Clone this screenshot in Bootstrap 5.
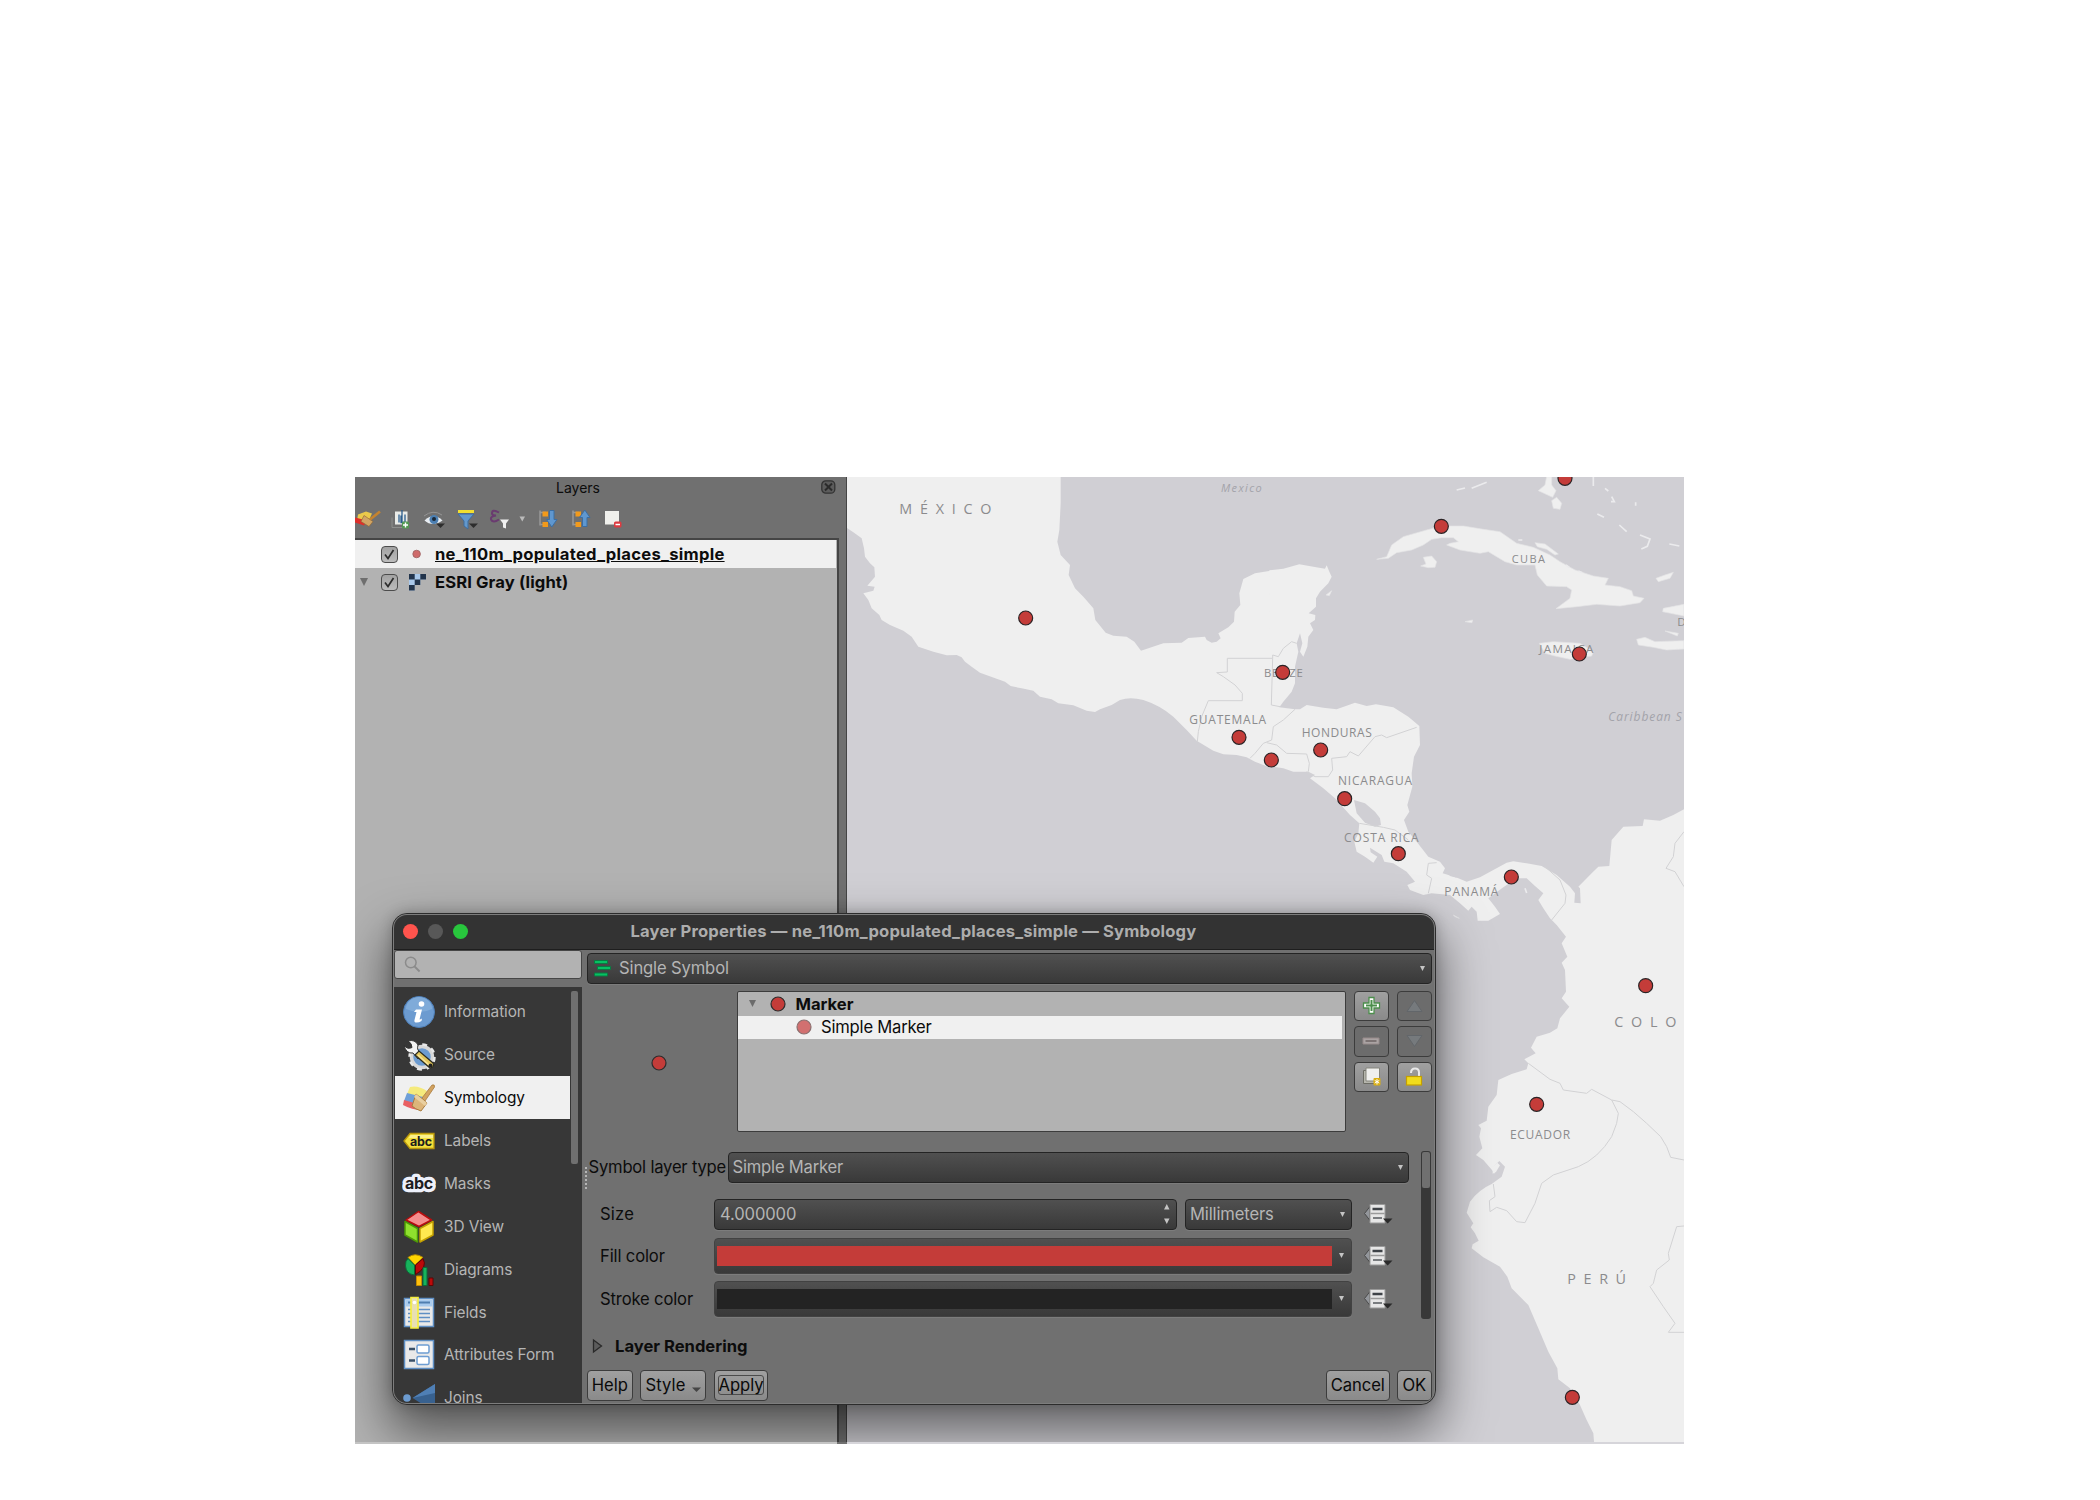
<!DOCTYPE html>
<html lang="en">
<head>
<meta charset="utf-8">
<meta name="viewport" content="width=device-width, initial-scale=1">
<title>Layer Properties — ne_110m_populated_places_simple — Symbology</title>
<link href="https://cdn.jsdelivr.net/npm/bootstrap@5.3.0/dist/css/bootstrap.min.css" rel="stylesheet">
<style>
body{font-family:Inter,"Liberation Sans",sans-serif;font-size:16.6px;letter-spacing:-.14px;line-height:20px;color:#0c0c0c;background:#fff;padding:477px 0 0 355px;overflow:hidden}
svg{display:block;flex:none}
.app-stage{width:1329px;height:967px;overflow:hidden}
.stage-clip{height:965px;overflow:hidden;position:relative}
.foot-strip{height:2px;background:linear-gradient(90deg,#c4c4c4 482px,#707070 482px,#707070 492px,#d6d5da 492px)}
.fw-b{font-weight:700;letter-spacing:.1px}
/* layers panel */
.layers-panel{width:492px;background:#707070;border-right:1.5px solid #454545}
.panel-head{height:25px;font-size:14px;letter-spacing:0;padding-left:7px}
.tools{height:36px}
.layer-list{background:#b2b2b2;border-top:2px solid #454545;border-right:2px solid #454545;width:484px}
.layer-row{height:28px;padding-left:26px}
.layer-row.active{background:#f0f0f0;margin-right:1px}
.check{width:17px;height:17px;border:1.4px solid #4c4c4c;border-radius:4px;background:linear-gradient(#a2a2a2,#bcbcbc)}
/* dialog */
.dlg{left:36.5px;top:436px;width:1044.5px;height:491.5px;border:1px solid #2c2c2c;border-radius:15px;background:#707070;box-shadow:0 24px 50px 4px rgba(0,0,0,.52),0 0 14px rgba(0,0,0,.22)}
.dlg-in{border:1px solid #7d7d7d;border-radius:14px;overflow:hidden}
.dlg-title{height:35px;background:#333;border-bottom:1.5px solid #1e1e1e;color:#adadad;letter-spacing:.17px;padding:0 0 2px 12px}
.light{width:15px;height:15px;border-radius:50%}
.side{width:188px}
.search{height:29px;background:#b2b2b2;border:1.5px solid #464646;border-radius:3px;padding-left:9px}
.side-list{margin-top:8px;height:416px;background:#373737;padding:3px 3.5px 0 1.5px;overflow:hidden}
.side-item{height:42.95px;padding-left:7px;gap:8px;font-size:15.4px;letter-spacing:-.1px;color:#b5b5b5;width:175px;padding-top:1px}
.side-item.active{background:#f0f0f0;color:#0a0a0a}
.side-item svg{width:34px;height:34px}
.side-thumb{width:7.5px;height:173px;background:#707070;border-radius:2px;margin-top:1px}
.dark-box{border:1.5px solid #242424;border-radius:4px;background:linear-gradient(#505050,#393939);color:#b5b5b5;height:30.5px;box-shadow:0 1px 0 #7c7c7c}
.clr{height:35.5px;border-color:#424242;padding:0 6px 0 2px}
.swatch{height:20.5px;width:614.5px}
.tree{width:609px;height:141px;background:#b2b2b2;border:1.5px solid #3c3c3c;border-radius:2px}
.qbtn{height:30.5px;border:1.5px solid #3c3c3c;border-radius:4px;background:linear-gradient(#a0a0a0,#8a8a8a);color:#0a0a0a;padding:0;line-height:20px;font-size:16.6px;letter-spacing:-.05px}
.qbtn.off{background:#6c6c6c}
.tool-grid{display:grid;grid-template-columns:35px 35px;gap:5px 8px;margin-left:8px}
.main-col{padding:3px 3.5px 0 5.5px}
.form-lbl{width:115px;padding-left:1px}
</style>
</head>
<body>
<main class="app-stage">
<div class="stage-clip d-flex">
  <section class="layers-panel d-flex flex-column flex-shrink-0">
    <div class="panel-head position-relative d-flex justify-content-center">
      <span class="d-block" style="margin-top:1px;margin-right:52px">Layers</span>
      <svg class="position-absolute" style="right:10px;top:3px" width="15" height="14" viewBox="0 0 15 14"><rect x=".8" y=".8" width="13" height="12.4" rx="4" fill="#5c5c5c" stroke="#333" stroke-width="1.3"/><path d="M4 3.5l7 7M11 3.5l-7 7" stroke="#2b2b2b" stroke-width="2"/></svg>
    </div>
    <div class="tools">
      <svg width="300" height="34" viewBox="355 501.500 300 34">
        <path d="M358 514l8-3 6 2-4 9-11-2z" fill="#eac94b"/><path d="M355 517l12 3-3 5-9-3z" fill="#dd2f2a"/><path d="M364 515l9 6-4 5-8-5z" fill="#d1a565" stroke="#8d6530" stroke-width=".6"/><path d="M370 519l10-8" stroke="#c5832f" stroke-width="2.600"/>
        <path d="M392 517v10h11M396 512v12" stroke="#8d8f8d" fill="none"/><path d="M395 511h12.500v13H395z" fill="#e9ebe8"/><path d="M399 514v8M402 509.500v12M405 514v8h-4v-7" fill="none" stroke="#2b5e8e" stroke-width="1.300"/><rect x="402" y="521" width="7" height="7" rx="1.5" fill="#529a52"/><path d="M405.500 522v5M403 524.500h5" stroke="#fff" stroke-width="1.4"/>
        <path d="M424 515.500q9-7 18-1" fill="none" stroke="#949494"/><path d="M424.500 520q9-9 18 0q-10 7-18 0z" fill="#e8edf2"/><circle cx="434" cy="519" r="4.500" fill="#4c7fb2"/><circle cx="434" cy="518.500" r="2" fill="#1b2836"/><path d="M436 523h9l-4.500 4.500z" fill="#2d2d2d"/>
        <path d="M458 511h16" stroke="#f2df2f" stroke-width="3"/><path d="M458 513.500h16l-6 7v8l-4-3v-5z" fill="#6398cc" stroke="#3f6c9d"/><path d="M469 523h9l-4.500 4.500z" fill="#2d2d2d"/>
        <path d="M499 512q-7-4-7 1q0 2 4 2q-6 1-5 4q2 4 8 0" fill="none" stroke="#6a3b70" stroke-width="2"/><path d="M500 519h9l-3 4v5l-3-1v-4z" fill="#f0f0f0"/>
        <path d="M519.500 516h5.500l-2.700 5z" fill="#bbb"/>
        <g id="exp"><path d="M540 510v15M540 512h6M540 524h6" stroke="#989898" stroke-width="1.500"/><rect x="542.500" y="511" width="5.500" height="5" fill="#f29a1b"/><rect x="542.500" y="521.500" width="5.500" height="5" fill="#f29a1b"/></g>
        <path d="M549.500 510h4.500v9h3l-5.200 7.500-5.300-7.500h3z" fill="#5f97cf" stroke="#3b6ea3"/>
        <use href="#exp" x="33"/><path d="M582.500 526h4.500v-9h3l-5.200-7.500-5.300 7.500h3z" fill="#5f97cf" stroke="#3b6ea3"/>
        <rect x="605" y="510.500" width="14" height="13.500" fill="#f0f0ec"/><rect x="614" y="521" width="7.500" height="6" rx="1.500" fill="#dd3b40"/><path d="M615.500 524h4.500" stroke="#fff" stroke-width="1.500"/>
      </svg>
    </div>
    <div class="layer-list flex-grow-1">
      <div class="layer-row active d-flex align-items-center">
        <span class="check"><svg width="14" height="14" viewBox="0 0 14 14"><path d="M3 7.500l3 4L11.500 3" fill="none" stroke="#2c2c2c" stroke-width="1.700"/></svg></span>
        <svg width="37" height="12" viewBox="0 0 37 12"><circle cx="18.600" cy="6" r="3.800" fill="#cf6b6b" stroke="#9a6060" stroke-width=".8"/></svg>
        <span class="fw-b text-decoration-underline" style="letter-spacing:.27px">ne_110m_populated_places_simple</span>
      </div>
      <div class="layer-row d-flex align-items-center" style="padding-left:2px">
        <svg width="24" height="12" viewBox="0 0 24 12"><path d="M3 2h8l-4 8z" fill="#6e6e6e"/></svg>
        <span class="check"><svg width="14" height="14" viewBox="0 0 14 14"><path d="M3 7.500l3 4L11.500 3" fill="none" stroke="#2c2c2c" stroke-width="1.700"/></svg></span>
        <svg width="37" height="18" viewBox="0 0 37 18"><path d="M11 1h17v5.500h-5.700v5.500h-5.700v5.500H11z" fill="#a9c8ea"/><path d="M11 1h5.700v5.500H11zM22.300 1H28v5.500h-5.700zM16.700 6.500h5.600V12h-5.600zM11 12h5.700v5.500H11z" fill="#22344c"/></svg>
        <span class="fw-b" style="letter-spacing:.12px">ESRI Gray (light)</span>
      </div>
    </div>
  </section>

  <section class="flex-grow-1">
    <svg width="837" height="965" viewBox="847 477 837 965">
      <rect x="847" y="477" width="837" height="967" fill="#d0cfd4"/>
      <g transform="translate(1250 470) scale(.33333)">
        <g fill="#efefef" stroke="#e4e4e6" stroke-width="2" stroke-linejoin="round">
        <path stroke="none" transform="translate(-1230)" d="M15 15H662V100L658 180 652 215 662 255 690 285 686 315 705 355 730 380 760 415 766 450 797 488 820 497 860 500 883 515 903 542 970 520 1025 518 1045 504 1095 500 1100 510 1115 518 1130 515 1142 505 1135 490 1165 472 1182 455 1184 425 1201 405 1198 370 1210 327 1245 310 1292 302V893L1270 885 1245 875 1220 862 1190 855 1150 853 1120 842 1070 812 1040 780 1000 740Q960 706 910 690Q870 680 840 690L815 705 780 718 765 726 740 722 700 706 655 700 635 688 600 680 580 662 545 655 512 648 495 635 470 626 420 608 395 590 375 575 365 562 350 555 320 556 280 545 235 530 215 500 190 482 150 465 125 450 118 435 95 415 85 390 70 370 100 362 104 350 82 347 105 320 103 292 90 280 75 260 72 235 65 205 40 187 15 170z"/>
        <path stroke="none" d="M58 301L100 296 148 283 190 290 225 296 230 286 238 305 245 320 235 340 210 365 198 385 198 410 176 430 196 435 195 450 180 460 190 480 175 500 172 530 160 560 150 545 157 520 150 490 140 520 145 545 135 590 135 640 125 665 100 695 88 712 135 718 150 718 170 705 220 713 260 718 315 698 350 708 378 703 430 712 475 740 508 768 510 825 492 860 485 910 487 950 472 1005 478 1025 462 1050 475 1085 500 1115 535 1160 570 1175 585 1195 578 1210 605 1218 625 1225 650 1235 690 1222 730 1200 770 1178 790 1174 830 1180 875 1188 920 1215 960 1250 975 1270 973 1298 992 1300 990 1255 985 1250 1025 1210 1045 1190 1078 1188 1085 1110 1120 1070 1178 1068 1182 1048 1230 1052 1270 1035 1302 1018V2925H1033L1030 2890 1010 2850 990 2805 960 2755 925 2728 922 2695 895 2645 865 2575 835 2505 785 2455 772 2420 750 2390 700 2362 665 2335 668 2323 686 2312 675 2290 662 2272 670 2260 650 2228 660 2195Q685 2160 725 2142L755 2120 765 2090 748 2073 730 2090 735 2112 726 2100 700 2070 678 2055 697 2035 688 2000 693 1975 685 1965 710 1952 715 1910 740 1875 745 1830 785 1812 830 1798 835 1780 823 1768 857 1750 843 1733 860 1700 900 1688 922 1675 930 1645 958 1610 935 1585 948 1565 945 1500 935 1478 952 1460 935 1420 948 1400 920 1365 900 1345 880 1315 865 1290 880 1270 855 1248 830 1225 800 1225 760 1252 715 1285 735 1310 750 1332 715 1352 683 1352 680 1325 665 1310 655 1322 630 1300 600 1275 545 1270 520 1275 480 1260 472 1245 495 1235 470 1205 430 1180 403 1175 395 1155 360 1133 362 1147 382 1160 370 1178 345 1160 320 1145 313 1115 325 1090 328 1060 300 1035 255 985 220 955 180 925 195 915 175 905 130 905 100 895 60 889z"/>
        <path d="M380 268L410 260 425 225 460 200 530 180 575 168 640 168 700 178 750 185 800 220 850 232 900 255 930 275 975 300 1030 318 1075 325 1065 345 1110 350 1145 362 1150 378 1182 385 1170 398 1110 408 1040 403 980 410 918 416 960 385 965 360 950 350 890 348 862 315 855 285 800 285 765 275 715 245 690 250 630 240 590 225 600 220 625 215 610 203 575 203 545 208 520 225 485 240 440 248 415 265z"/>
        <path d="M520 262L545 258 560 275 555 292 535 293 512 288 528 282zM855 218L885 222 925 252 915 255 890 238 862 230zM868 520L910 515 990 520 1030 545 1025 558 960 568 915 558 885 550zM1302 403L1240 415 1238 425 1262 430 1302 438zM1160 508L1185 502 1215 515 1302 512V537L1250 540 1210 532 1165 525zM1218 325L1245 315 1270 307 1260 325 1225 335zM890 20H905V45L918 62 908 82 865 62 885 45zM905 92L920 82 935 100 930 118 910 115zM645 455L668 450 666 458zM228 375L245 362 238 377zM1245 483L1285 490 1282 498zM610 1335L628 1345 615 1340z"/>
        </g>
        <path d="M620 60l25-6M665 55l45-18M1030 20v28M1065 55l10 8M1085 80l8 15h-10M1157 97v10M1042 132l20 10M1095 133M1108 165l22 20M1170 195l30 12-8 22-18 8M1258 222l30 6M805 210h12M825 1255l5 14M948 285l10 8M985 303l12 5" fill="none" stroke="#ebebed" stroke-width="5"/>
        <path d="M312 990L345 1000 375 1025 390 1045 393 1065 375 1070 345 1058 320 1030zM585 1195l15-5 15 15 5 18-20-5z" fill="#d0cfd4"/>
        <path d="M728 2090l14-12 8 8-12 20-10 5z" fill="#efefef"/>
        <g fill="none" stroke="#d2d2d4" stroke-width="3">
          <path d="M-158 815L-155 785-145 740-125 692H-23V670L-45 645-80 620-100 608-68 606V565H68V555L85 560 100 535 125 515 140 520M68 565L64 705 90 710M135 718L100 750 70 770 65 810 40 820 15 850 0 865M50 818L80 825 110 850 170 852 178 880 175 905M170 905L195 920H235L248 900 245 865 290 860 300 845 325 858 375 800 395 795 410 803 500 772M328 1060L400 1072 435 1080 475 1110M535 1180L560 1178M535 1180L530 1215 545 1225 535 1270M885 1190L930 1230 948 1275 945 1300 905 1350M1302 1085L1275 1120 1270 1160 1248 1195 1275 1205 1302 1250"/>
          <path d="M835 1780L900 1828 930 1840 940 1860 1010 1870 1025 1858 1085 1890 1110 1895 1150 1925 1190 1960 1232 2000 1250 2030 1262 2062 1302 2070M1085 1890L1105 1930 1100 1960 1085 2000Q1045 2065 985 2090L910 2115 875 2140 855 2200 825 2258 800 2255 770 2222 740 2212 720 2225 718 2192 735 2180 730 2142M1302 2268L1280 2270 1255 2350 1258 2370 1220 2400 1210 2440 1200 2450 1240 2510 1275 2560 1255 2587H1302"/>
        </g>
        <g font-family="'Open Sans','Noto Sans',sans-serif" fill="#8b8b8d" font-size="36">
          <text x="-1052" y="131" font-size="43" textLength="276">MÉXICO</text>
          <text x="-87" y="66" font-size="33" font-style="italic" fill="#a3a3aa" textLength="122">Mexico</text>
          <text x="785" y="278" font-size="33" textLength="100">CUBA</text>
          <text x="42" y="620" font-size="34" textLength="116">BELIZE</text>
          <text x="868" y="549" font-size="35" textLength="162">JAMAICA</text>
          <text x="1282" y="467" font-size="35">D</text>
          <text x="-182" y="762" textLength="230">GUATEMALA</text>
          <text x="155" y="801" textLength="210">HONDURAS</text>
          <text x="264" y="946" textLength="222">NICARAGUA</text>
          <text x="282" y="1116" textLength="224">COSTA RICA</text>
          <text x="583" y="1277" textLength="162">PANAMÁ</text>
          <text x="1075" y="753" font-style="italic" fill="#a3a3aa" textLength="220">Caribbean S</text>
          <text x="1093" y="1672" font-size="43" textLength="186">COLO</text>
          <text x="780" y="2008" textLength="180">ECUADOR</text>
          <text x="952" y="2441" font-size="43" textLength="176">PERÚ</text>
        </g>
        <g fill="#c43c39" stroke="#2a2325" stroke-width="3.500">
          <circle cx="-673" cy="444" r="21"/><circle cx="-33" cy="802" r="21"/><circle cx="64" cy="870" r="21"/><circle cx="212" cy="840" r="21"/><circle cx="284" cy="986" r="21"/><circle cx="445" cy="1151" r="21"/><circle cx="784" cy="1221" r="21"/><circle cx="1187" cy="1547" r="21"/><circle cx="860" cy="1903" r="21"/><circle cx="967" cy="2782" r="21"/><circle cx="988" cy="552" r="21"/><circle cx="574" cy="169" r="21"/><circle cx="945" cy="25" r="21"/><circle cx="98" cy="607" r="21"/>
        </g>
      </g>
    </svg>
  </section>

  <section class="dlg position-absolute">
    <div class="dlg-in h-100 d-flex flex-column">
      <div class="dlg-title d-flex align-items-center flex-shrink-0 position-relative">
        <div class="d-flex" style="gap:10px;margin-left:-3px"><span class="light" style="background:#ff544d"></span><span class="light" style="background:#585858"></span><span class="light" style="background:#28c63d"></span></div>
        <span class="fw-bold text-nowrap" style="margin-left:163px">Layer Properties — ne_110m_populated_places_simple — Symbology</span>
      </div>
      <div class="d-flex flex-grow-1">
        <div class="side flex-shrink-0">
          <div class="search d-flex align-items-center"><svg width="17" height="17" viewBox="0 0 17 17"><circle cx="6.800" cy="6.500" r="5.300" fill="none" stroke="#8b8b8b" stroke-width="1.500"/><path d="M10.600 10.500l5 5" stroke="#8b8b8b" stroke-width="1.900"/></svg></div>
          <div class="side-list d-flex justify-content-between">
            <div>
              <div class="side-item d-flex align-items-center"><svg viewBox="0 0 34 34"><circle cx="17" cy="17" r="15.500" fill="#6c9bd0" stroke="#4e7fb8"/><path d="M4 14a13 12 0 0 1 26 0q-12 6-26 0z" fill="#7fabd9"/><circle cx="19.500" cy="9" r="2.800" fill="#fff"/><path d="M14 14.500h6l-2.500 10q1 0 2.500-1l-.5 2.500q-3 2-6 1.500-1.500-.5-1-2.500l2-8H12z" fill="#fff"/></svg>Information</div>
              <div class="side-item d-flex align-items-center"><svg viewBox="0 0 34 34"><circle cx="20" cy="19" r="10.500" fill="#6c9bd0" stroke="#d8d8d8" stroke-width="3.500"/><circle cx="20" cy="19" r="12.500" fill="none" stroke="#e8e8e8" stroke-width="2.500" stroke-dasharray="4.900 4.900"/><path d="M2 7q3 5 8 2.500Q10 5 6 3q7-2 10 4-1 3 0 5l4 5-4 4-5-6Q4 16 2 7z" fill="#f4f4f4" stroke="#333"/><path d="M13 17l4-4 14 12q2 4-3 5z" fill="#e3c65a" stroke="#2b2b20" stroke-width="1.200"/><path d="M16 17l11 10" stroke="#f6e49a" stroke-width="1.500"/><circle cx="28.500" cy="27.500" r="2" fill="#222"/></svg>Source</div>
              <div class="side-item active d-flex align-items-center"><svg viewBox="0 0 34 34"><path d="M8 6q8-2 17 4l-4 8-16-5z" fill="#f5ea7c"/><path d="M5 12l16 4-5 8-14-4z" fill="#6f9fd8"/><path d="M2 19l14 4 4 6q-10 0-19-5z" fill="#e96062"/><path d="M14 13l11 9-6 8q-6-2-9-5z" fill="#dcb57a" stroke="#a87b3e"/><path d="M14 13l11 9-2 3-11-9z" fill="#e9cfa0"/><path d="M20 17l10-13q3-1 2.500 2L23 20z" fill="#d3a360" stroke="#a87b3e" stroke-width=".8"/></svg>Symbology</div>
              <div class="side-item d-flex align-items-center"><svg viewBox="0 0 34 34"><path d="M2 17l6-7.500h24v15H8z" fill="#f3df3c" stroke="#b8960c" stroke-width="1.300"/><path d="M8.500 11H31v3H7z" fill="#fbf08c"/><text x="8" y="21.500" font-size="12.500" font-weight="700" fill="#1c1c1c" textLength="22">abc</text></svg>Labels</div>
              <div class="side-item d-flex align-items-center"><svg viewBox="0 0 34 34"><text x="3" y="22" font-size="16" font-weight="700" fill="none" stroke="#eef1fb" stroke-width="6.500" stroke-linejoin="round" textLength="28" aria-hidden="true">abc</text><text x="3" y="22" font-size="16" font-weight="700" fill="#1e1e22" textLength="28">abc</text></svg>Masks</div>
              <div class="side-item d-flex align-items-center"><svg viewBox="0 0 34 34" stroke-width="1.500" stroke-linejoin="round"><path d="M16.500 1.500L29.500 10 17 16.500 4 10z" fill="#f48d8d" stroke="#b80d0d"/><path d="M3 11.500l12.500 7v13.500L3 25z" fill="#8fe02e" stroke="#4d9a06"/><path d="M31 11.500l-13 7v13.500L31 25z" fill="#ffe950" stroke="#c4a000"/></svg>3D View</div>
              <div class="side-item d-flex align-items-center"><svg viewBox="0 0 34 34" stroke-width="1"><path d="M13 12L6 4.500Q13-1 21 4.500z" fill="#ffd500" stroke="#b98d00"/><path d="M12.500 12v10Q4 21 3.500 13 3 8 6 5.500z" fill="#17b25c" stroke="#0b6b38"/><path d="M13.500 12L21 5.500q5 9-7.500 16z" fill="#bb0a0a" stroke="#5e0505"/><path d="M14.500 23h5v9.500h-5z" fill="#ffbf0d" stroke="#c28c00"/><path d="M21 14.500h4v18h-4z" fill="#17b25c" stroke="#0b6b38"/><path d="M27 25h4v7.500h-4z" fill="#bb0a0a" stroke="#5e0505"/></svg>Diagrams</div>
              <div class="side-item d-flex align-items-center"><svg viewBox="0 0 34 34"><path d="M2.500 2.500h29v28h-29z" fill="#e9e9e9" stroke="#5f8fc4" stroke-width="1.500"/><path d="M3.500 3.500h27v7h-27z" fill="#a9cbee"/><path d="M6 6.500h22" stroke="#4f7eb0" stroke-width="2"/><path d="M6 13.500h22M6 17.500h22M6 21.500h22M6 25.500h22" stroke="#5f8fc4" stroke-width="1.400"/><path d="M9 1.500h7v30.500H9z" fill="#e8dfb4" stroke="#f5ee3e" stroke-width="1.700"/><circle cx="12.500" cy="6.500" r="1.800" fill="#fff"/></svg>Fields</div>
              <div class="side-item d-flex align-items-center"><svg viewBox="0 0 34 34"><path d="M2.500 2.500h29v28h-29z" fill="#e9e9e9" stroke="#5f8fc4" stroke-width="1.500"/><path d="M7 11h6M7 22.500h6" stroke="#3a5068" stroke-width="2.600"/><rect x="15" y="7" width="12" height="8" rx="1.500" fill="#fff" stroke="#6d9dd2" stroke-width="1.500"/><rect x="15" y="18.500" width="12" height="8" rx="1.500" fill="#fff" stroke="#6d9dd2" stroke-width="1.500"/></svg>Attributes Form</div>
              <div class="side-item d-flex align-items-center"><svg viewBox="0 0 34 34"><circle cx="5" cy="17" r="3.800" fill="#6c9bd0"/><path d="M10.500 17L33 3v28z" fill="#38618f"/><path d="M10.500 17L33 3v9z" fill="#4f7fb5"/></svg>Joins</div>
            </div>
            <div class="side-thumb"></div>
          </div>
        </div>

        <div class="main-col flex-grow-1 d-flex flex-column">
          <div class="dark-box d-flex align-items-center justify-content-between" style="padding:0 5px 0 5px">
            <div class="d-flex align-items-center"><svg width="18" height="18" viewBox="0 0 18 18"><path d="M1.500 1.500h13v3h-13zM4.500 7.500h13v3h-13zM1.500 14h13v3h-13z" fill="#06c162" stroke="#0a7a42"/></svg><span style="margin-left:8px">Single Symbol</span></div>
            <svg width="7" height="7" viewBox="0 0 7 7"><path d="M1 1h5l-2.500 5z" fill="#c4c4c4"/></svg>
          </div>
          <div class="d-flex" style="margin-top:7px;height:141px">
            <div class="d-flex align-items-center" style="width:149.500px;padding-top:3px"><svg width="18" height="18" viewBox="0 0 18 18" style="margin-left:63px"><circle cx="9" cy="9" r="7" fill="#c43c39" stroke="#2d2d2d" stroke-width="1.200"/></svg></div>
            <div class="tree">
              <div class="d-flex align-items-center" style="height:24px;padding-left:9px"><svg width="11" height="9" viewBox="0 0 11 9"><path d="M2 1h7L5.500 8z" fill="#6b6b6b"/></svg><svg width="18" height="18" viewBox="0 0 18 18" style="margin:0 8.500px 0 11.500px"><circle cx="9" cy="9" r="7" fill="#c43c39" stroke="#2d2d2d" stroke-width="1.200"/></svg><span class="fw-b" style="letter-spacing:0">Marker</span></div>
              <div class="d-flex align-items-center" style="height:23px;background:#f0f0f0;margin-right:3px;padding-left:57px"><svg width="18" height="18" viewBox="0 0 18 18" style="margin-right:8.500px"><circle cx="9" cy="9" r="7" fill="#d27070" stroke="#8b7070" stroke-width="1.200"/></svg><span style="letter-spacing:-.2px">Simple Marker</span></div>
            </div>
            <div class="tool-grid align-content-start">
              <button class="btn qbtn d-flex align-items-center justify-content-center"><svg width="19" height="19" viewBox="0 0 19 19"><path d="M7 1.500h5V7h5.500v5H12v5.500H7V12H1.500V7H7z" fill="#fff" stroke="#4c8f4c" stroke-width="1.300"/><path d="M9.500 4v11M4 9.500h11" stroke="#4c8f4c" stroke-width="2"/></svg></button>
              <button class="btn qbtn off d-flex align-items-center justify-content-center"><svg width="17" height="14" viewBox="0 0 17 14"><path d="M8.500 1.500L16 12.500H1z" fill="#767a7d" stroke="#62666a"/></svg></button>
              <button class="btn qbtn off d-flex align-items-center justify-content-center"><svg width="18" height="8" viewBox="0 0 18 8"><path d="M1 1h16v6H1z" fill="#aaa3a3" stroke="#968a8a"/><path d="M3.500 4h11" stroke="#7c7373" stroke-width="2"/></svg></button>
              <button class="btn qbtn off d-flex align-items-center justify-content-center"><svg width="17" height="14" viewBox="0 0 17 14"><path d="M8.500 12.500L1 1.500h15z" fill="#767a7d" stroke="#62666a"/></svg></button>
              <button class="btn qbtn d-flex align-items-center justify-content-center"><svg width="19" height="19" viewBox="0 0 19 19"><path d="M1.500 3.500h12v13h-12z" fill="#b5b5ac" stroke="#6c6c64"/><path d="M4 1h13.500v13H4z" fill="#f0f0ee" stroke="#85857c"/><rect x="11.500" y="11" width="7" height="7.500" rx="1" fill="#d9ae10"/><path d="M15 12v5.500M12.700 13.400l4.600 2.700M17.300 13.400l-4.600 2.700" stroke="#fff"/></svg></button>
              <button class="btn qbtn d-flex align-items-center justify-content-center"><svg width="18" height="19" viewBox="0 0 18 19"><path d="M6 6q0-4.500 4-4.500t4 4V9" fill="none" stroke="#e9e9e9" stroke-width="2"/><rect x="1.500" y="9.500" width="15" height="8.500" fill="#f1dc1c" stroke="#c5a000" stroke-width="1.200"/></svg></button>
            </div>
          </div>
          <div class="d-flex position-relative" style="margin-top:19px;height:170px">
            <svg class="position-absolute" style="left:-3px;top:15px" width="4" height="24" viewBox="0 0 4 24"><path d="M2 1v22" stroke="#b5b5b5" stroke-width="2" stroke-dasharray="2 2"/></svg>
            <div style="width:825px">
              <div class="d-flex align-items-center" style="margin-top:1.500px"><span class="text-nowrap" style="width:140.500px;padding-left:1.500px;letter-spacing:-.2px">Symbol layer type</span>
                <div class="dark-box flex-grow-1 d-flex align-items-center justify-content-between" style="padding:0 4px;margin-right:3.500px"><span style="letter-spacing:-.2px">Simple Marker</span><svg width="7" height="7" viewBox="0 0 7 7"><path d="M1 1h5l-2.500 5z" fill="#c4c4c4"/></svg></div></div>
              <div class="d-flex align-items-center" style="margin:16.500px 0 0 12px"><span class="form-lbl" style="letter-spacing:.2px">Size</span>
                <div class="dark-box d-flex align-items-center justify-content-between" style="width:463px;padding:0 5px;margin-right:8px"><span>4.000000</span><svg width="8" height="22" viewBox="0 0 8 22"><path d="M1 6.500h5.500L3.800 1zM1 15.500h5.500L3.800 21z" fill="#c4c4c4"/></svg></div>
                <div class="dark-box d-flex align-items-center justify-content-between" style="width:167px;padding:0 5px 0 4px"><span>Millimeters</span><svg width="7" height="7" viewBox="0 0 7 7"><path d="M1 1h5l-2.500 5z" fill="#c4c4c4"/></svg></div>
                <svg width="30" height="22" viewBox="0 0 30 22" style="margin-left:11px"><g id="dd"><path d="M7 3.500L1.500 10.500 7 17.500z" fill="#93969b" stroke="#4a4a4a"/><path d="M7 1.500h15v18.500H7z" fill="#e6e6e6" stroke="#999"/><path d="M7.500 10.500h14" stroke="#9a9a9a" stroke-width="1.500"/><path d="M9.500 6h10" stroke="#3e4247" stroke-width="2.500"/><path d="M10 15h9" stroke="#55585c" stroke-width="1.500"/><path d="M20 15.500h9.500l-4.800 5z" fill="#2a2a2a"/></g></svg></div>
              <div class="d-flex align-items-center" style="margin:8.500px 0 0 12px"><span class="form-lbl">Fill color</span>
                <div class="dark-box clr d-flex align-items-center justify-content-between" style="width:638px"><div class="swatch" style="background:#c43c39"></div><svg width="7" height="7" viewBox="0 0 7 7"><path d="M1 1h5l-2.500 5z" fill="#c4c4c4"/></svg></div>
                <svg width="30" height="22" viewBox="0 0 30 22" style="margin-left:11px"><use href="#dd"/></svg></div>
              <div class="d-flex align-items-center" style="margin:7.500px 0 0 12px"><span class="form-lbl">Stroke color</span>
                <div class="dark-box clr d-flex align-items-center justify-content-between" style="width:638px"><div class="swatch" style="background:#232323"></div><svg width="7" height="7" viewBox="0 0 7 7"><path d="M1 1h5l-2.500 5z" fill="#c4c4c4"/></svg></div>
                <svg width="30" height="22" viewBox="0 0 30 22" style="margin-left:11px"><use href="#dd"/></svg></div>
            </div>
            <div style="width:10px;height:168px;background:#383838;border-radius:3px;margin-left:9px;padding:1px"><div style="height:36px;background:#707070;border-radius:2px"></div></div>
          </div>
          <div class="d-flex align-items-center" style="margin:15px 0 0 5px"><svg width="12" height="16" viewBox="0 0 12 16"><path d="M1.500 2v12L9.500 8z" fill="#5c5c5c" stroke="#2a2a2a" stroke-width="1.300"/></svg><span class="fw-b" style="margin-left:11px;letter-spacing:0">Layer Rendering</span></div>
          <div class="d-flex" style="margin-top:14.500px">
            <button class="btn qbtn" style="width:45.500px">Help</button>
            <button class="btn qbtn d-flex align-items-center justify-content-between" style="width:66px;margin-left:7.500px;padding:0 3px 0 4.500px"><span style="letter-spacing:.1px">Style</span><svg width="11" height="16" viewBox="0 0 11 16"><path d="M1 10.500h9L5.500 15z" fill="#454545"/></svg></button>
            <button class="btn qbtn d-flex align-items-center justify-content-center" style="width:54px;margin-left:8px"><span style="border:1px solid #4b4b4b;border-radius:3px;line-height:18px">Apply</span></button>
            <button class="btn qbtn ms-auto" style="width:63.500px">Cancel</button>
            <button class="btn qbtn" style="width:34.500px;margin-left:7.500px">OK</button>
          </div>
        </div>
      </div>
    </div>
  </section>
</div>
<div class="foot-strip"></div>
</main>
<script src="https://cdn.jsdelivr.net/npm/bootstrap@5.3.0/dist/js/bootstrap.bundle.min.js"></script>
</body>
</html>
